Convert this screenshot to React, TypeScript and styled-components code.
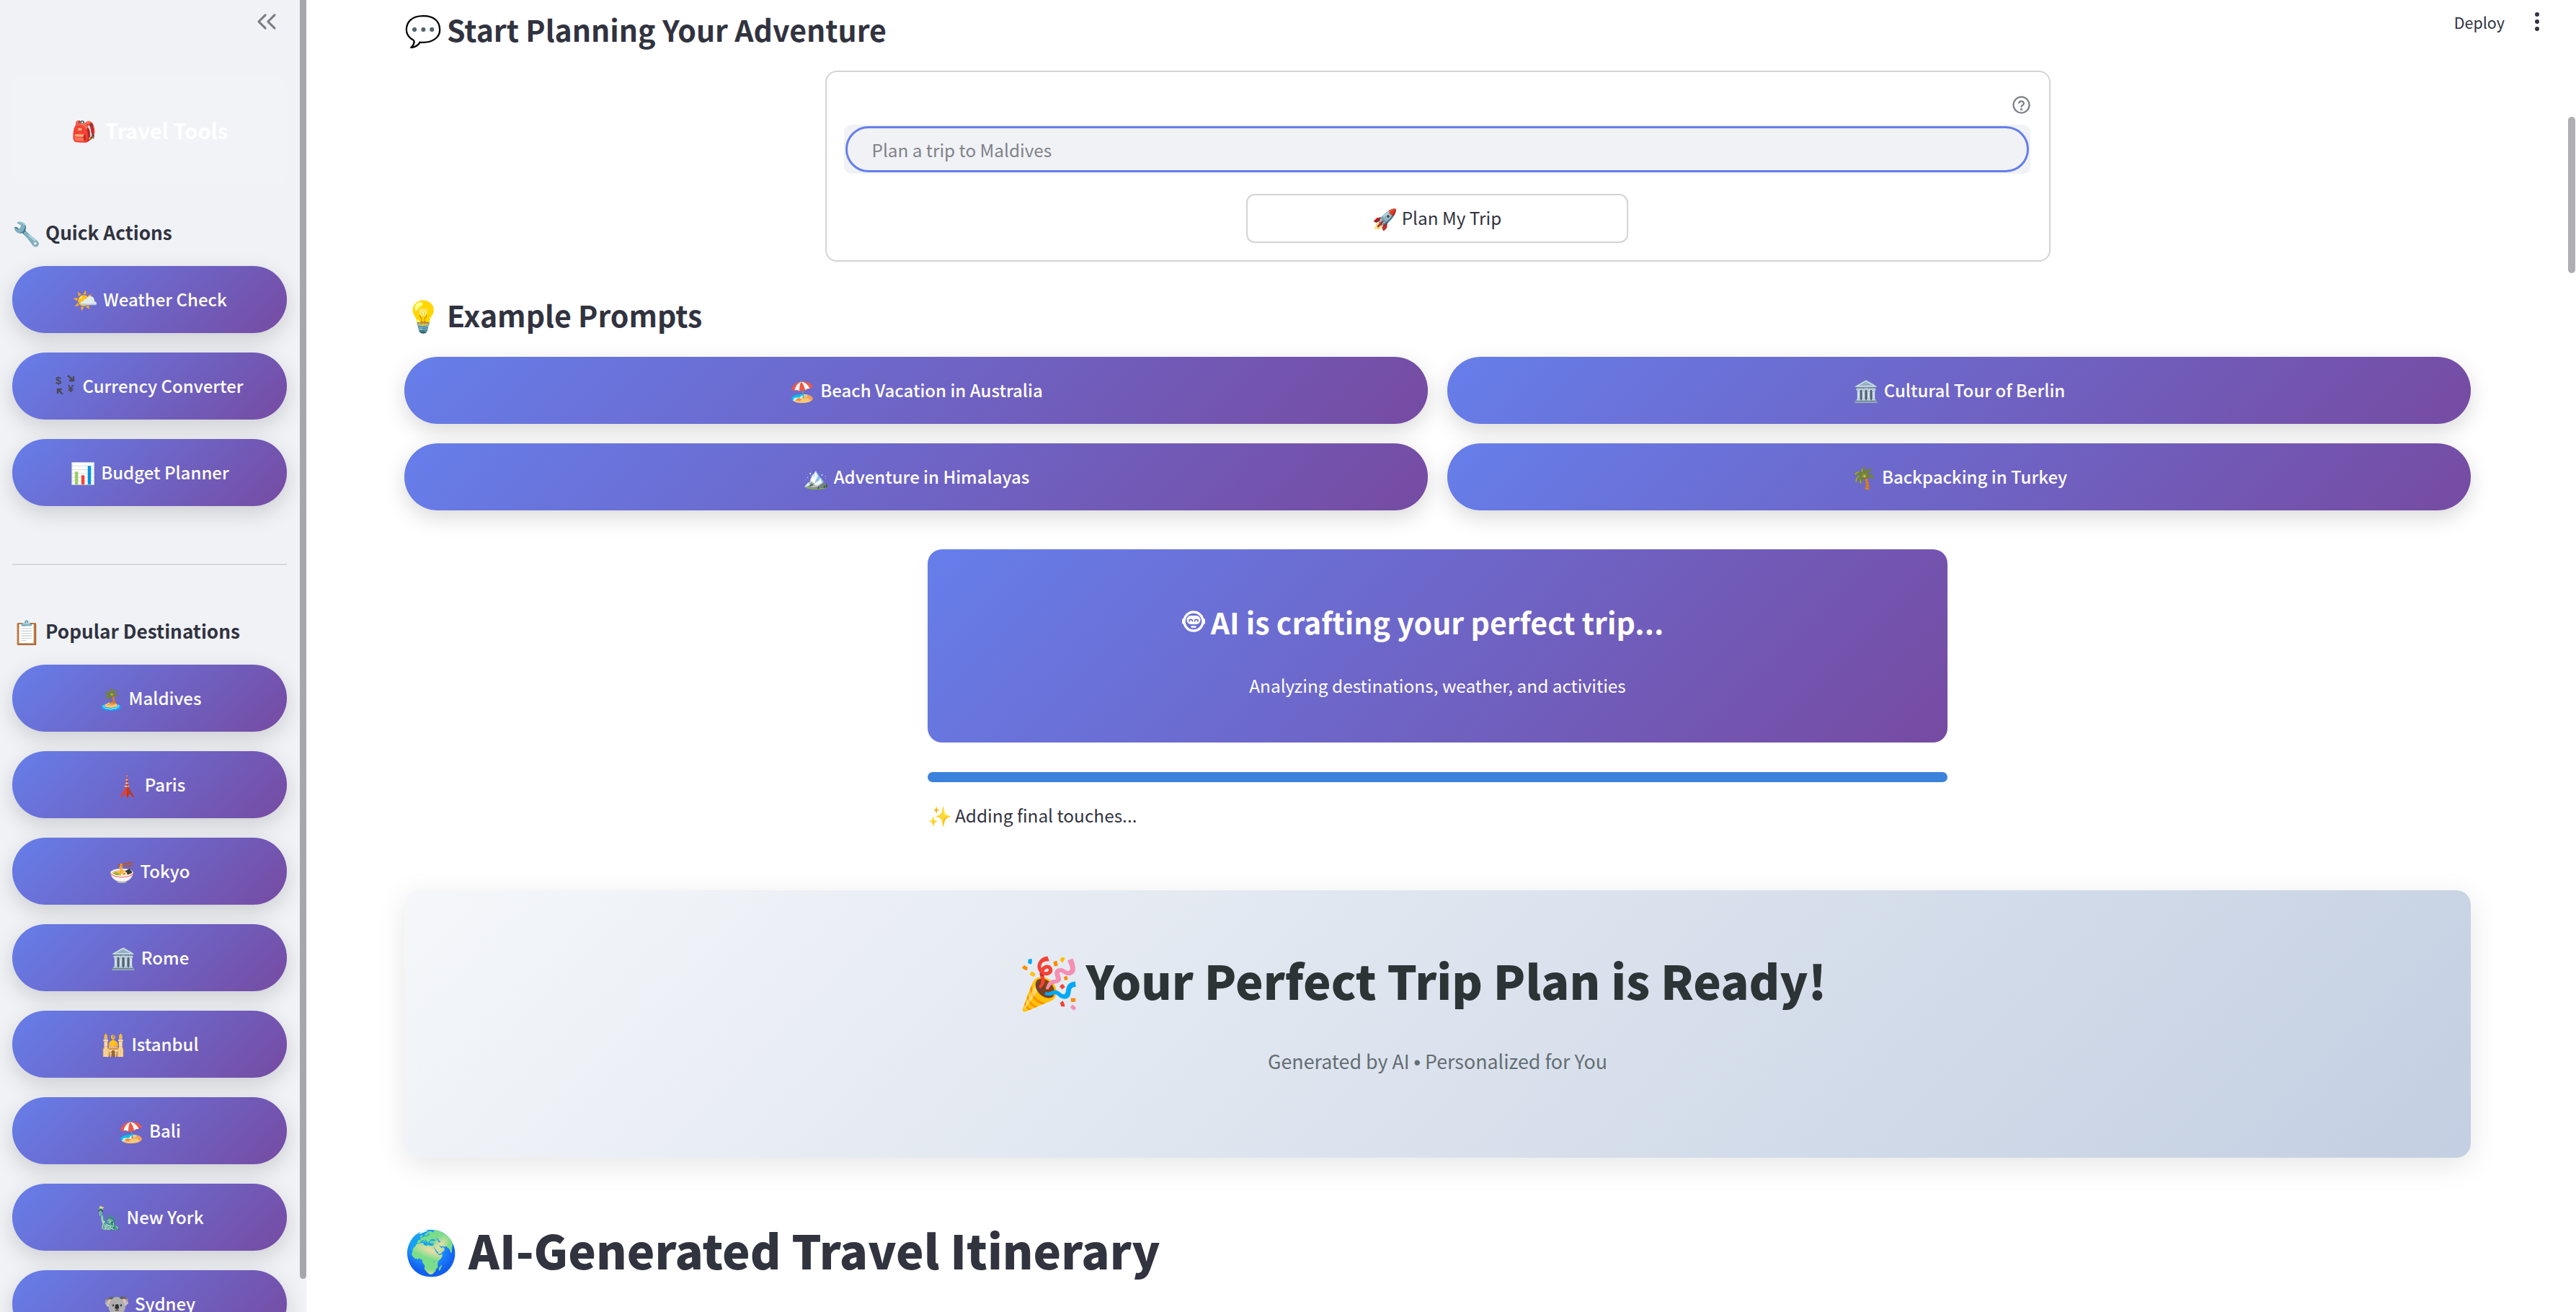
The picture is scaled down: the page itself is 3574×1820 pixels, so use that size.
import React from 'react'
import styled, { createGlobalStyle } from 'styled-components'

const GlobalStyle = createGlobalStyle`
  html, body {
    margin: 0;
    padding: 0;
    height: 100%;
    overflow: hidden;
    background: #fff;
    font-family: "Noto Sans CJK SC", "Noto Sans", sans-serif;
    color: #31333f;
  }
`

const Page = styled.div`
  display: flex;
  width: 3574px;
  height: 1820px;
  overflow: hidden;
  position: relative;
`

const Sidebar = styled.aside`
  position: relative;
  flex: 0 0 425px;
  height: 1820px;
  overflow: hidden;
  box-sizing: border-box;
  padding: 0 27px 0 17px;
  background: #f0f2f6;
`

const SideScroll = styled.div`
  position: absolute;
  top: 0;
  right: 0;
  width: 9px;
  height: 1774px;
  border-radius: 0 0 5px 5px;
  background: #a6a6ae;
`

const Collapse = styled.div`
  display: flex;
  justify-content: flex-end;
  align-items: flex-start;
  height: 104px;
  padding: 8px 6px 0 0;
  box-sizing: border-box;
  color: #7b7d86;
`

const Emoji = styled.span<{ $size: number }>`
  flex: none;
  font-size: ${p => p.$size}px;
  line-height: 1;
`

const Brand = styled.div`
  display: flex;
  align-items: center;
  justify-content: center;
  gap: 12px;
  height: 152px;
  border-radius: 20px;
  background: #f2f3f7;
  font-size: 29px;
  font-weight: 700;
  color: #fff;
`

const SideHeading = styled.div<{ $top: number }>`
  display: flex;
  align-items: center;
  gap: 6px;
  margin-top: ${p => p.$top}px;
  height: 40px;
  font-size: 26.2px;
  font-weight: 600;
`

const SideList = styled.div<{ $top: number }>`
  display: flex;
  flex-direction: column;
  gap: 27px;
  margin-top: ${p => p.$top}px;
`

const GradientButton = styled.button`
  display: flex;
  align-items: center;
  justify-content: center;
  gap: 7px;
  width: 100%;
  height: 93px;
  flex: none;
  border: 0;
  border-radius: 46px;
  padding: 0 0 3px;
  background: linear-gradient(135deg, #667eea 0%, #764ba2 100%);
  box-shadow: 0 10px 30px rgba(0, 0, 0, 0.15);
  font: inherit;
  font-size: 24px;
  font-weight: 500;
  color: #fff;
`

const Divider = styled.hr`
  margin: 80px 0 0;
  border: 0;
  height: 2px;
  background: #d5d7dc;
`

const Main = styled.main`
  position: relative;
  flex: 1;
  height: 1820px;
  overflow: hidden;
  box-sizing: border-box;
  padding: 0 146px 0 136px;
`

const Toolbar = styled.div`
  position: absolute;
  top: 0;
  right: 50px;
  display: flex;
  align-items: center;
  gap: 41px;
  height: 60px;
  font-size: 21.5px;
`

const MainScroll = styled.div`
  position: absolute;
  top: 162px;
  right: 1px;
  width: 10px;
  height: 217px;
  border-radius: 5px;
  background: #aeaeb3;
`

const SectionTitle = styled.h2<{ $top: number }>`
  display: flex;
  align-items: center;
  gap: 7px;
  margin: ${p => p.$top}px 0 0;
  height: 60px;
  font-size: 41px;
  font-weight: 600;
`

const FormWrap = styled.div`
  display: flex;
  justify-content: center;
  margin-top: 28px;
`

const FormCard = styled.form`
  display: flex;
  flex-direction: column;
  align-items: center;
  width: 1700px;
  height: 265px;
  box-sizing: border-box;
  padding: 33px 26px 0 24px;
  border: 2px solid #d4d4d7;
  border-radius: 16px;
`

const HelpRow = styled.div`
  display: flex;
  justify-content: flex-end;
  width: 100%;
  height: 40px;
  color: #808289;
`

const InputShell = styled.div`
  display: flex;
  width: 100%;
  height: 68px;
  box-sizing: border-box;
  padding: 2px;
  border-radius: 10px;
  background: #f0f2f6;
`

const TextInput = styled.div`
  display: flex;
  align-items: center;
  width: 100%;
  box-sizing: border-box;
  padding-left: 34px;
  border: 3px solid #667eea;
  border-radius: 32px;
  font-size: 24.3px;
  color: #808289;
`

const PlanButton = styled.button`
  display: flex;
  align-items: center;
  justify-content: center;
  gap: 6px;
  width: 530px;
  height: 68px;
  margin-top: 28px;
  padding: 0 0 3px;
  border: 2px solid #d4d4d7;
  border-radius: 12px;
  background: #fff;
  font: inherit;
  font-size: 24.3px;
  color: #31333f;
`

const PromptGrid = styled.div`
  display: grid;
  grid-template-columns: 1fr 1fr;
  gap: 27px;
  margin-top: 29px;
`

const Progress = styled.div`
  width: 1415px;
  margin: 54px auto 0;
`

const LoadingCard = styled.div`
  display: flex;
  flex-direction: column;
  align-items: center;
  height: 268px;
  box-sizing: border-box;
  padding-top: 71px;
  border-radius: 20px;
  background: linear-gradient(135deg, #667eea 0%, #764ba2 100%);
  color: #fff;
`

const LoadingTitle = styled.div`
  display: flex;
  align-items: center;
  gap: 8px;
  height: 58px;
  padding-right: 41px;
  font-size: 41px;
  font-weight: 700;
`

const LoadingSub = styled.div`
  margin-top: 42px;
  font-size: 24.4px;
`

const Bar = styled.div`
  height: 14px;
  margin-top: 41px;
  border-radius: 7px;
  background: #3b82dc;
`

const Status = styled.div`
  display: flex;
  align-items: center;
  gap: 4px;
  height: 40px;
  margin-top: 25px;
  font-size: 24.4px;
`

const ReadyCard = styled.div`
  display: flex;
  flex-direction: column;
  align-items: center;
  height: 371px;
  box-sizing: border-box;
  margin-top: 85px;
  padding-top: 82px;
  border-radius: 20px;
  background: linear-gradient(135deg, #f5f7fa 0%, #c3cfe2 100%);
  box-shadow: 0 10px 40px rgba(0, 0, 0, 0.1);
`

const ReadyTitle = styled.div`
  display: flex;
  align-items: center;
  gap: 8px;
  height: 84px;
  padding-right: 43px;
  font-size: 65px;
  font-weight: 800;
  color: #2d3436;
`

const ReadySub = styled.div`
  margin-top: 51px;
  font-size: 26.8px;
  color: #636e72;
`

const Bullet = styled.span`
  font-family: "Liberation Sans", sans-serif;
`

const BigTitle = styled.h1`
  display: flex;
  align-items: center;
  gap: 14px;
  margin: 89px 0 0;
  height: 76px;
  font-size: 65px;
  font-weight: 800;
`

const DollarYen = styled.text`
  font-family: "Liberation Sans", sans-serif;
  font-size: 15px;
  font-weight: 700;
  fill: #4a4a52;
`

const CollapseIcon = () => (
  <svg width="44" height="44" viewBox="0 0 24 24" fill="none" stroke="currentColor" strokeWidth="1.7" strokeLinecap="round" strokeLinejoin="round">
    <path d="m11 17-5-5 5-5" />
    <path d="m18 17-5-5 5-5" />
  </svg>
)

const HelpIcon = () => (
  <svg width="25" height="25" viewBox="0 0 24 24" fill="none" stroke="currentColor" strokeWidth="2.2" strokeLinecap="round">
    <circle cx="12" cy="12" r="10.6" />
    <path d="M8.8 9.2a3.3 3.3 0 0 1 6.4 1c0 2.2-3.2 2.4-3.2 4.2" />
    <circle cx="12" cy="18" r="0.6" />
  </svg>
)

const DotsIcon = () => (
  <svg width="8" height="28" viewBox="0 0 8 28" fill="#31333f">
    <circle cx="4" cy="4" r="3" />
    <circle cx="4" cy="14" r="3" />
    <circle cx="4" cy="24" r="3" />
  </svg>
)

// white line robot in the loading banner
const RobotIcon = () => (
  <svg width="32" height="30" viewBox="0 0 32 30" fill="none">
    <rect x="0" y="11" width="4" height="8" rx="2" fill="#fff" />
    <rect x="28" y="11" width="4" height="8" rx="2" fill="#fff" />
    <circle cx="16" cy="15" r="13" stroke="#fff" strokeWidth="3.4" />
    <rect x="6.5" y="7" width="19" height="12" rx="6" fill="#fff" />
    <path d="M10 14.5a2.2 2.2 0 0 1 4.4 0M17.6 14.5a2.2 2.2 0 0 1 4.4 0" stroke="#6a6cc8" strokeWidth="1.8" strokeLinecap="round" />
    <path d="M13.5 22.5h5" stroke="#fff" strokeWidth="2.4" strokeLinecap="round" />
  </svg>
)

// dark currency exchange mark, closer to the reference than the font's coloured one
const CurrencyIcon = () => (
  <svg width="30" height="28" viewBox="0 0 30 28">
    <DollarYen x="0" y="13">$</DollarYen>
    <DollarYen x="17" y="24">¥</DollarYen>
    <path d="M17 1l8 7M25 2v6h-6" fill="none" stroke="#4a4a52" strokeWidth="2.4" />
    <path d="M10 27l-7-7M3 26v-6h6" fill="none" stroke="#4a4a52" strokeWidth="2.4" />
  </svg>
)

const quickActions = [
  { icon: <Emoji $size={29}>🌤️</Emoji>, label: 'Weather Check' },
  { icon: <CurrencyIcon />, label: 'Currency Converter' },
  { icon: <Emoji $size={29}>📊</Emoji>, label: 'Budget Planner' },
]
const destinations = [
  ['🏝️', 'Maldives'],
  ['🗼', 'Paris'],
  ['🍜', 'Tokyo'],
  ['🏛️', 'Rome'],
  ['🕌', 'Istanbul'],
  ['🏖️', 'Bali'],
  ['🗽', 'New York'],
  ['🐨', 'Sydney'],
]
const prompts = [
  ['🏖️', 'Beach Vacation in Australia'],
  ['🏛️', 'Cultural Tour of Berlin'],
  ['🏔️', 'Adventure in Himalayas'],
  ['🌴', 'Backpacking in Turkey'],
]

export default function App() {
  return (
    <Page>
      <GlobalStyle />
      <Sidebar>
        <SideScroll />
        <Collapse><CollapseIcon /></Collapse>
        <Brand><Emoji $size={28}>🎒</Emoji><span>Travel Tools</span></Brand>
        <SideHeading $top={46}><Emoji $size={32}>🔧</Emoji><span>Quick Actions</span></SideHeading>
        <SideList $top={27}>
          {quickActions.map(a => (
            <GradientButton key={a.label} type="button">{a.icon}<span>{a.label}</span></GradientButton>
          ))}
        </SideList>
        <Divider />
        <SideHeading $top={71}><Emoji $size={32}>📋</Emoji><span>Popular Destinations</span></SideHeading>
        <SideList $top={27}>
          {destinations.map(([e, l]) => (
            <GradientButton key={l} type="button"><Emoji $size={29}>{e}</Emoji><span>{l}</span></GradientButton>
          ))}
        </SideList>
      </Sidebar>
      <Main>
        <Toolbar><span>Deploy</span><DotsIcon /></Toolbar>
        <MainScroll />
        <SectionTitle $top={10}><Emoji $size={42}>💬</Emoji><span>Start Planning Your Adventure</span></SectionTitle>
        <FormWrap>
          <FormCard>
            <HelpRow><HelpIcon /></HelpRow>
            <InputShell><TextInput>Plan a trip to Maldives</TextInput></InputShell>
            <PlanButton type="button"><Emoji $size={28}>🚀</Emoji><span>Plan My Trip</span></PlanButton>
          </FormCard>
        </FormWrap>
        <SectionTitle $top={43}><Emoji $size={42}>💡</Emoji><span>Example Prompts</span></SectionTitle>
        <PromptGrid>
          {prompts.map(([e, l]) => (
            <GradientButton key={l} type="button"><Emoji $size={29}>{e}</Emoji><span>{l}</span></GradientButton>
          ))}
        </PromptGrid>
        <Progress>
          <LoadingCard>
            <LoadingTitle><RobotIcon /><span>AI is crafting your perfect trip...</span></LoadingTitle>
            <LoadingSub>Analyzing destinations, weather, and activities</LoadingSub>
          </LoadingCard>
          <Bar />
          <Status><Emoji $size={27}>✨</Emoji><span>Adding final touches...</span></Status>
        </Progress>
        <ReadyCard>
          <ReadyTitle><Emoji $size={70}>🎉</Emoji><span>Your Perfect Trip Plan is Ready!</span></ReadyTitle>
          <ReadySub>Generated by AI <Bullet>•</Bullet> Personalized for You</ReadySub>
        </ReadyCard>
        <BigTitle><Emoji $size={60}>🌍</Emoji><span>AI-Generated Travel Itinerary</span></BigTitle>
      </Main>
    </Page>
  )
}
